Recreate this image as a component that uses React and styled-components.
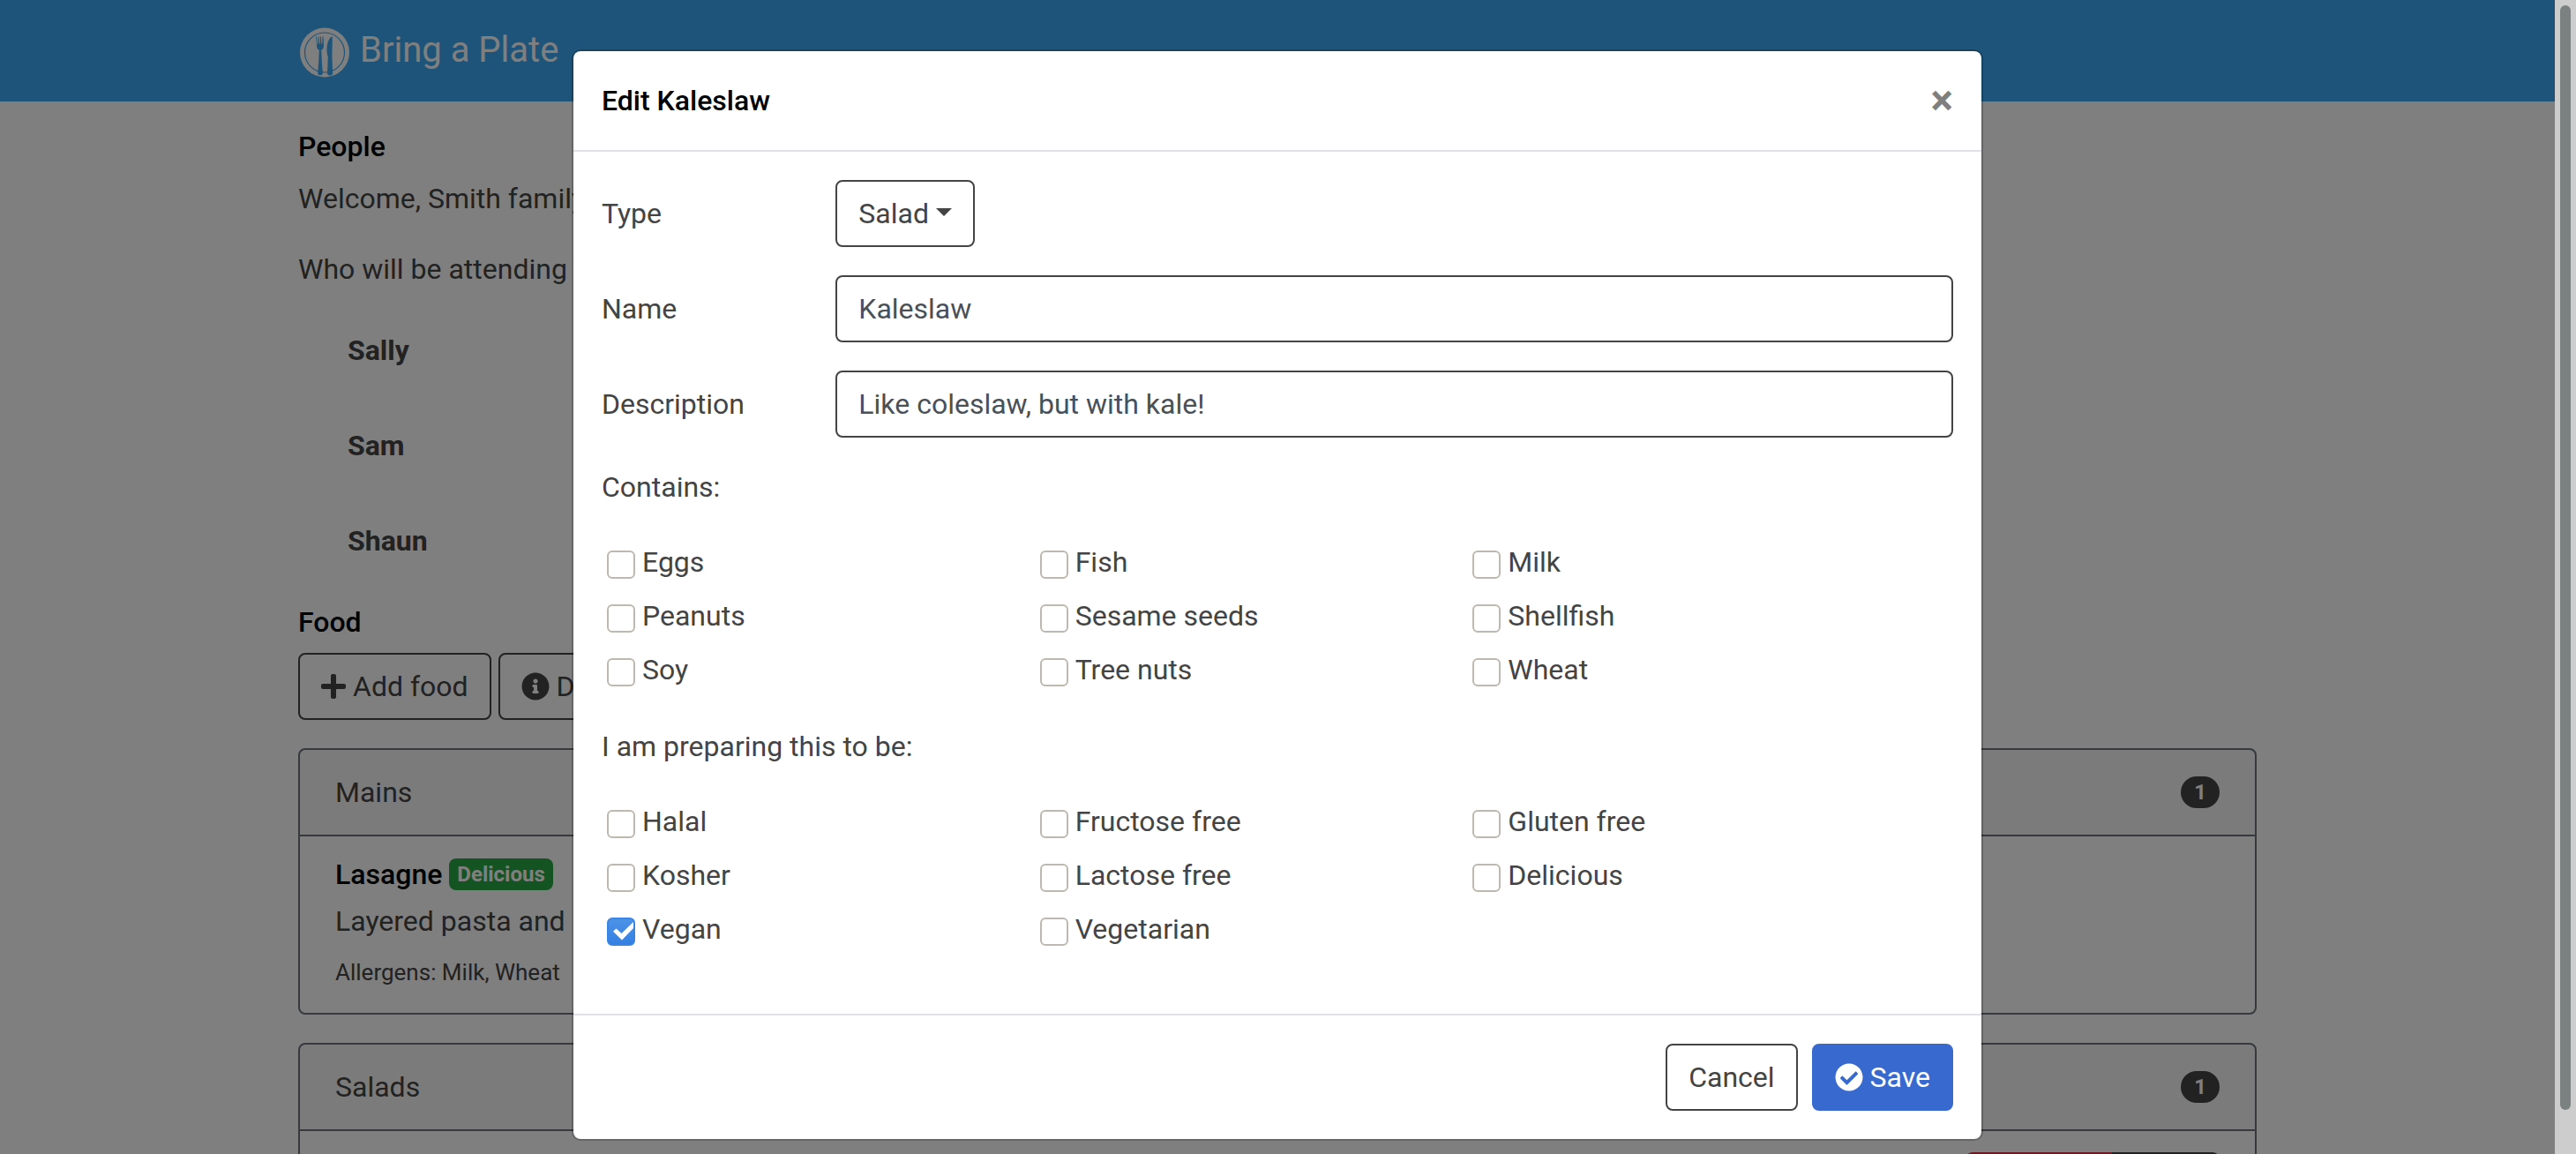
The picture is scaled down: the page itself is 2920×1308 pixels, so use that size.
import React, { useId, useState } from "react";
import styled, { createGlobalStyle } from "styled-components";
import { FaCheckCircle, FaInfoCircle, FaPlus } from "react-icons/fa";

const GlobalStyle = createGlobalStyle`
  *, *::before, *::after { box-sizing: border-box; }
  body {
    margin: 0;
    background: #fff;
    color: #444;
    font-family: Roboto, "Liberation Sans", sans-serif;
    font-size: 32px;
    line-height: 48px;
    overflow: hidden;
  }
  p, h1, h2, h3, h4 { margin: 0; }
  button, input, select { font: inherit; color: inherit; margin: 0; }
`;

const Window = styled.div`
  display: flex;
  height: 100vh;
  overflow: hidden;
`;

const Viewport = styled.div`
  position: relative;
  flex: 1;
  min-width: 0;
  overflow: hidden;
`;

const ScrollTrack = styled.div`
  width: 24px;
  padding: 6px;
  background: #cdcdcd;
`;

const ScrollThumb = styled.div`
  height: calc(100% - 44px);
  border-radius: 6px;
  background: #7b8080;
`;

const Container = styled.div`
  max-width: 2280px;
  margin: 0 auto;
  padding: 0 30px;
`;

const Navbar = styled.header`
  background: #3ca8f2;
`;

const Brand = styled.a`
  display: inline-flex;
  align-items: center;
  gap: 10px;
  height: 115px;
  color: #fff;
  font-size: 40px;
  line-height: 60px;
  text-decoration: none;
`;

const BrandName = styled.span`
  padding-bottom: 2px;
`;

const Heading = styled.h2`
  margin-bottom: 16px;
  color: #000;
  font-size: 32px;
  font-weight: 500;
  line-height: 38px;
`;

const Main = styled.main`
  padding-top: 32px;
`;

const Paragraph = styled.p`
  margin-bottom: 32px;
`;

const PeopleList = styled.ul`
  display: grid;
  gap: 36px;
  margin: 0 0 37px;
  padding: 0 56px;
  list-style: none;
  font-weight: 700;
`;

const Person = styled.li`
  display: flex;
  align-items: center;
  height: 72px;
`;

const Toolbar = styled.div`
  display: flex;
  gap: 8px;
  margin-bottom: 32px;
`;

const Button = styled.button`
  display: inline-flex;
  align-items: center;
  gap: 8px;
  padding: 12px 24px;
  border: 2px solid ${(p) => (p.$primary ? "#3769cf" : "#444")};
  border-radius: 8px;
  background: ${(p) => (p.$primary ? "#3769cf" : "transparent")};
  color: ${(p) => (p.$primary ? "#fff" : "#444")};
  line-height: 48px;
  white-space: nowrap;
`;

const PlusIcon = styled(FaPlus)`
  width: 28px;
  height: 32px;
`;

const Card = styled.section`
  margin-bottom: 32px;
  border: 2px solid #6c757d;
  border-radius: 8px;
`;

const CardHeader = styled.header`
  display: flex;
  align-items: center;
  justify-content: space-between;
  padding: 24px 40px;
  border-bottom: 2px solid #6c757d;
  background: rgba(0, 0, 0, 0.03);
`;

const CardBody = styled.div`
  padding: 24px 40px;
`;

const Badge = styled.span`
  padding: ${(p) => (p.$pill ? "6px 15px" : "6px 9px")};
  border-radius: ${(p) => (p.$pill ? "18px" : "8px")};
  background: ${(p) => (p.$pill ? "#444" : "#28a745")};
  color: #fff;
  font-size: 24px;
  font-weight: 700;
  line-height: 24px;
`;

const DishName = styled.h3`
  display: flex;
  align-items: center;
  gap: 8px;
  margin-bottom: 10px;
  color: #000;
  font-size: 32px;
  font-weight: 500;
  line-height: 38px;
`;

const Allergens = styled.p`
  margin-top: 12px;
  font-size: 26px;
  line-height: 44px;
`;

const ButtonGroup = styled.div`
  display: flex;
  justify-content: flex-end;
`;

const GroupButton = styled.button`
  width: ${(p) => (p.$end ? "122px" : "166px")};
  height: 76px;
  border: 0;
  border-radius: ${(p) => (p.$end ? "0 8px 8px 0" : "8px 0 0 8px")};
  background: ${(p) => (p.$end ? "#444" : "#dc3545")};
`;

const Backdrop = styled.div`
  position: absolute;
  inset: 0;
  padding: 56px 0;
  background: rgba(0, 0, 0, 0.5);
`;

const Modal = styled.form`
  max-width: 1600px;
  margin: 0 auto;
  border: 2px solid rgba(0, 0, 0, 0.2);
  border-radius: 10px;
  background: #fff;
  background-clip: padding-box;
`;

const ModalHeader = styled.header`
  display: flex;
  align-items: center;
  justify-content: space-between;
  padding: 32px;
  border-bottom: 2px solid #dee2e6;
`;

const ModalTitle = styled.h1`
  color: #000;
  font-size: 32px;
  font-weight: 500;
  line-height: 48px;
`;

const CloseButton = styled.button`
  display: flex;
  padding: 0;
  border: 0;
  background: none;
  color: #7f7f7f;
  font-size: 48px;
  font-weight: 700;
  line-height: 48px;
`;

const ModalBody = styled.div`
  padding: 32px 32px 33px;
`;

const ModalFooter = styled.footer`
  display: flex;
  justify-content: flex-end;
  gap: 16px;
  padding: 32px;
  border-top: 2px solid #dee2e6;
`;

const FormRow = styled.div`
  display: grid;
  grid-template-columns: 1fr 5fr;
  align-items: center;
  margin: 0 -30px 32px;

  > * { margin: 0 30px; }
`;

const TextInput = styled.input`
  min-width: 0;
  height: 76px;
  padding: 12px 24px;
  border: 2px solid #444;
  border-radius: 8px;
  background: #fff;
  color: #495057;
  outline: none;
`;

const SelectBox = styled.div`
  display: grid;
  justify-self: start;
  align-items: center;

  > * { grid-area: 1 / 1; }
`;

const Select = styled.select`
  width: 158px;
  height: 76px;
  padding: 0 24px;
  border: 2px solid #444;
  border-radius: 8px;
  background: #fff;
  color: #444;
  appearance: none;
`;

const Caret = styled.span`
  justify-self: end;
  margin: 0 26px 4px 0;
  border: 9px solid transparent;
  border-top-color: #444;
  border-bottom: 0;
  pointer-events: none;
`;

const CheckGroup = styled.fieldset`
  margin: 0 0 39px;
  padding: 0;
  border: 0;
`;

const Legend = styled.legend`
  padding: 0;
`;

const CheckGrid = styled.div`
  display: grid;
  grid-template-columns: repeat(3, 1fr);
  gap: 13px 0;
  padding: 37px 60px 0 0;
`;

const CheckLabel = styled.label`
  display: flex;
  align-items: center;
  gap: 8px;
  padding-left: 6px;
`;

const Tick = styled.span`
  display: grid;
  padding-top: 6px;

  > * { grid-area: 1 / 1; }
  > svg { pointer-events: none; }
`;

const Checkbox = styled.input`
  width: 32px;
  height: 32px;
  border: 2px solid #bfb8af;
  border-radius: 6px;
  background: #fff;
  appearance: none;

  &:checked {
    border-color: #3a84e4;
    background: linear-gradient(#4c92e8, #3480e2);
  }
`;

function PlateLogo() {
  return (
    <svg width="60" height="60" viewBox="0 -1.5 60 60" aria-hidden="true">
      <circle cx="30" cy="30" r="28" fill="#fff" />
      <circle cx="30" cy="30" r="22.500" fill="none" stroke="#3ca8f2" strokeWidth="1.2" />
      <g fill="#3ca8f2">
        <path d="M20 12h1l.3 8h1l.3-8h1l.2 8h1l.2-8h1l.3 8h1l.3-8h1l.3 10c0 3-1 4.600-2.700 5.300l.6 13 1 13c.2 3.400-5.800 3.400-5.600 0l1-13 .6-13c-1.800-.7-2.800-2.300-2.800-5.300z" />
        <path d="M38.800 12c-3.600.4-6 7-6.300 14-.1 3 .2 6 1.300 9l-.8 18.500c-.1 3.400 6.200 3.400 6.200 0l-.8-18.500z" />
      </g>
    </svg>
  );
}

function CheckItem({ label, defaultChecked = false }) {
  const [checked, setChecked] = useState(defaultChecked);
  return (
    <CheckLabel>
      <Tick>
        <Checkbox type="checkbox" checked={checked} onChange={(e) => setChecked(e.target.checked)} />
        {checked && (
          <svg width="32" height="32" viewBox="0 0 32 32" aria-hidden="true">
            <path d="M10.500 12.500l6 5.500L30 5v7L17 25.500 7 15.800z" fill="#fff" />
          </svg>
        )}
      </Tick>
      {label}
    </CheckLabel>
  );
}

function CheckSection({ title, items, selected = [] }) {
  return (
    <CheckGroup>
      <Legend>{title}</Legend>
      <CheckGrid>
        {items.map((item) => (
          <CheckItem key={item} label={item} defaultChecked={selected.includes(item)} />
        ))}
      </CheckGrid>
    </CheckGroup>
  );
}

const ALLERGENS = ["Eggs", "Fish", "Milk", "Peanuts", "Sesame seeds", "Shellfish", "Soy", "Tree nuts", "Wheat"];
const DIETS = ["Halal", "Fructose free", "Gluten free", "Kosher", "Lactose free", "Delicious", "Vegan", "Vegetarian"];

function EditDialog() {
  const id = useId();
  return (
    <Backdrop>
      <Modal role="dialog" aria-labelledby={`${id}-title`} onSubmit={(e) => e.preventDefault()}>
        <ModalHeader>
          <ModalTitle id={`${id}-title`}>Edit Kaleslaw</ModalTitle>
          <CloseButton type="button" aria-label="Close">×</CloseButton>
        </ModalHeader>
        <ModalBody>
          <FormRow>
            <label htmlFor={`${id}-type`}>Type</label>
            <SelectBox>
              <Select id={`${id}-type`} defaultValue="Salad">
                <option>Main</option>
                <option>Salad</option>
                <option>Dessert</option>
              </Select>
              <Caret />
            </SelectBox>
          </FormRow>
          <FormRow>
            <label htmlFor={`${id}-name`}>Name</label>
            <TextInput id={`${id}-name`} defaultValue="Kaleslaw" />
          </FormRow>
          <FormRow>
            <label htmlFor={`${id}-description`}>Description</label>
            <TextInput id={`${id}-description`} defaultValue="Like coleslaw, but with kale!" />
          </FormRow>
          <CheckSection title="Contains:" items={ALLERGENS} />
          <CheckSection title="I am preparing this to be:" items={DIETS} selected={["Vegan"]} />
        </ModalBody>
        <ModalFooter>
          <Button type="button">Cancel</Button>
          <Button type="submit" $primary>
            <FaCheckCircle />
            Save
          </Button>
        </ModalFooter>
      </Modal>
    </Backdrop>
  );
}

export default function App() {
  return (
    <Window>
      <GlobalStyle />
      <Viewport>
        <Navbar>
          <Container>
            <Brand href="#">
              <PlateLogo />
              <BrandName>Bring a Plate</BrandName>
            </Brand>
          </Container>
        </Navbar>
        <Container>
          <Main>
            <Heading>People</Heading>
            <Paragraph>Welcome, Smith family.</Paragraph>
            <Paragraph>Who will be attending</Paragraph>
            <PeopleList>
              <Person>Sally</Person>
              <Person>Sam</Person>
              <Person>Shaun</Person>
            </PeopleList>
            <Heading>Food</Heading>
            <Toolbar>
              <Button type="button">
                <PlusIcon />
                Add food
              </Button>
              <Button type="button">
                <FaInfoCircle />
                Dietary
              </Button>
            </Toolbar>
            <Card>
              <CardHeader>
                Mains <Badge $pill>1</Badge>
              </CardHeader>
              <CardBody>
                <DishName>
                  Lasagne <Badge>Delicious</Badge>
                </DishName>
                <p>Layered pasta and</p>
                <Allergens>Allergens: Milk, Wheat</Allergens>
              </CardBody>
            </Card>
            <Card>
              <CardHeader>
                Salads <Badge $pill>1</Badge>
              </CardHeader>
              <CardBody>
                <ButtonGroup>
                  <GroupButton type="button" aria-label="Delete" />
                  <GroupButton type="button" aria-label="Edit" $end />
                </ButtonGroup>
              </CardBody>
            </Card>
          </Main>
        </Container>
        <EditDialog />
      </Viewport>
      <ScrollTrack>
        <ScrollThumb />
      </ScrollTrack>
    </Window>
  );
}
